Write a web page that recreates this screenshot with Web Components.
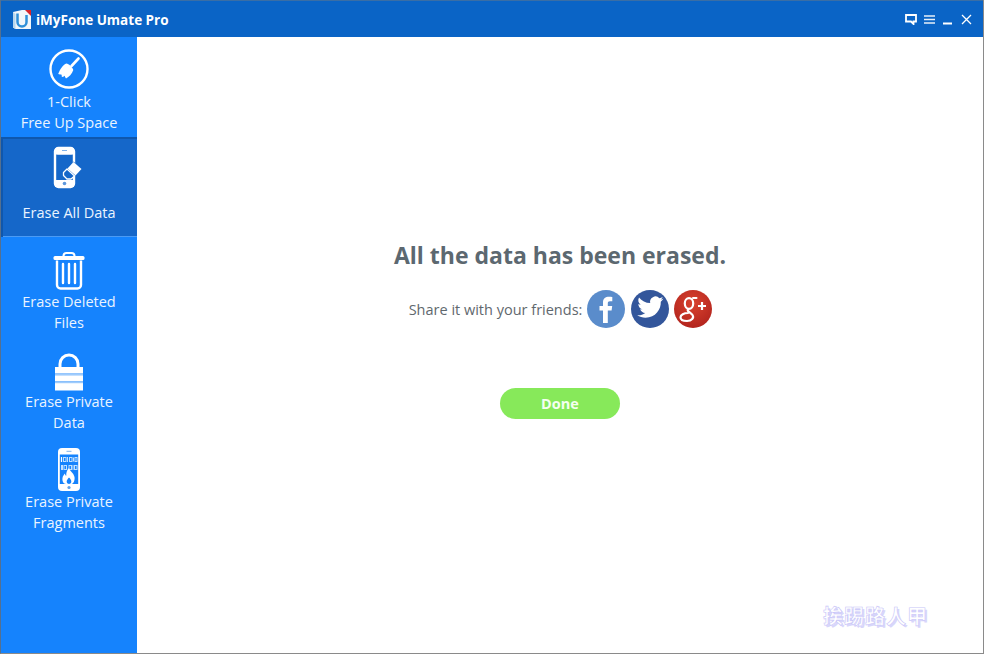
<!DOCTYPE html>
<html>
<head>
<meta charset="utf-8">
<title>iMyFone Umate Pro</title>
<style>
  html, body { margin: 0; height: 100%; }
  body { font-family: "Open Sans", "Noto Sans", sans-serif; overflow: hidden; }
</style>
</head>
<body>
<app-window>
  <title-bar slot="top">iMyFone Umate Pro</title-bar>
  <side-nav slot="side">
    <nav-item icon="broom">1-Click<br><span class="nudge">Free Up Space</span></nav-item>
    <nav-item icon="phone-erase" active>Erase All Data</nav-item>
    <nav-item icon="trash">Erase Deleted<br>Files</nav-item>
    <nav-item icon="lock">Erase Private<br>Data</nav-item>
    <nav-item icon="phone-fire">Erase Private<br>Fragments</nav-item>
  </side-nav>
  <done-panel></done-panel>
</app-window>

<script>
const icons = {
  broom: `<svg width="40" height="40" viewBox="0 0 40 40">
    <circle cx="20" cy="20" r="18.5" fill="none" stroke="#fff" stroke-width="2.4"/>
    <path d="M29.5 9.5 22.5 17" stroke="#fff" stroke-width="2.6" stroke-linecap="round"/>
    <path d="M17.5 14.5c2 .2 6 3.400 6.800 6.500-1.300 4-4.300 7-7.300 8.500-.8-.9-1.200-1.800-1.300-2.700-.9.800-1.800 1.200-2.900 1.300.1-1 0-2-.7-2.800-1 .3-1.900.2-2.900-.3 1-2.800 2-4.500 3.300-6.300 1.400-2 3.300-3.800 5-4.200z" fill="#fff"/>
  </svg>`,
  'phone-erase': `<svg width="32" height="44" viewBox="0 0 32 44">
    <rect x="2" y="2" width="19" height="39" rx="3.500" fill="#1567c9" stroke="#fff" stroke-width="2.400"/>
    <path d="M2 2.500h19v6H2zM2 34h19v7H2z" fill="#fff"/>
    <rect x="2" y="1.500" width="19" height="7" rx="3" fill="#fff"/>
    <rect x="9" y="4" width="5" height="1" fill="#7fb2ea"/>
    <circle cx="11.500" cy="37.500" r="1.800" fill="#5d97dc"/>
    <path d="M20.500 15.500 28 22.500 18.500 32.500 11.500 32 10 28.500z" fill="#1567c9"/>
    <path d="M20.500 16 28.500 23 22.500 29.500 14.500 22.500z" fill="#fff"/>
    <path d="M14 23 21.500 30 18 33h-4L10.500 29.500V26.500z" fill="#1567c9" stroke="#fff" stroke-width="1.300" stroke-linejoin="round"/>
  </svg>`,
  trash: `<svg width="32" height="38" viewBox="0 0 32 38">
    <path d="M10.500 4.500V4a3 3 0 0 1 3-3h5a3 3 0 0 1 3 3v.5" fill="none" stroke="#fff" stroke-width="2"/>
    <rect x="0.500" y="4" width="31" height="4" rx="1.500" fill="#fff"/>
    <path d="M4 8.500V33a3.500 3.500 0 0 0 3.500 3.500h17A3.500 3.500 0 0 0 28 33V8.500" fill="none" stroke="#fff" stroke-width="2.400"/>
    <path d="M10 12v19M16 12v19M22 12v19" stroke="#fff" stroke-width="2.400" stroke-linecap="round"/>
  </svg>`,
  lock: `<svg width="28" height="38" viewBox="0 0 28 38">
    <path d="M5 14V11a9 9 0 0 1 18 0v3" fill="none" stroke="#fff" stroke-width="3"/>
    <rect x="0" y="14" width="28" height="6.500" fill="#fff"/>
    <rect x="0" y="20.500" width="28" height="1.800" fill="#9fcbfb"/>
    <rect x="0" y="22.300" width="28" height="6" fill="#fff"/>
    <rect x="0" y="28.300" width="28" height="1.800" fill="#9fcbfb"/>
    <rect x="0" y="30.100" width="28" height="7.400" fill="#fff"/>
  </svg>`,
  'phone-fire': `<svg width="22" height="43" viewBox="0 0 22 43">
    <rect x="0" y="0" width="22" height="43" rx="4" fill="#fff"/>
    <rect x="8.500" y="2.800" width="5" height="1" fill="#7fb2ea"/>
    <rect x="1.800" y="6.500" width="18.400" height="29.500" fill="#1583fd"/>
    <g fill="none" stroke="#bfe0ff" stroke-width="1">
      <path d="M3.500 9v5M9.500 9v5M15.500 9.500v4M4 17v5M15 17v5"/>
      <rect x="5.500" y="9.500" width="2.500" height="4"/><rect x="11.500" y="9.500" width="2.500" height="4"/>
      <rect x="17" y="9.500" width="2" height="4"/><rect x="6" y="17.500" width="2.500" height="4"/>
      <rect x="11" y="17.500" width="2.500" height="4"/><rect x="16.500" y="17.500" width="2.500" height="4"/>
    </g>
    <path d="M3.500 9v5M4 17v5" stroke="#fff" stroke-width="1.200"/>
    <path d="M11 20c.5 3 4.500 4.500 5.500 9 .6 3-1 7-3 7H8c-2.500 0-4-3-3.500-6 .3-2 1.500-3.500 2.500-4.500 0 1.300.5 2 1.300 2.300C8 24.500 9 22 11 20z" fill="#fff"/>
    <path d="M11 29.500c1.500 1.500 2.500 2.800 2.300 4.500-.2 1.300-1.300 2-2.300 2s-2.100-.7-2.300-2c-.2-1.700 1-3 2.300-4.500z" fill="#1583fd"/>
    <circle cx="11" cy="39.500" r="1.600" fill="#5d9fe8"/>
  </svg>`
}

const barTemplate = document.createElement('template')
barTemplate.innerHTML = `
  <style>
    :host {
      display: flex;
      align-items: center;
      height: 37px;
      box-sizing: border-box;
      padding: 1px 0 0 12px;
      background: #0a64c6;
      border-top: 1px solid #3a6ea5;
      color: #fff;
      font: 700 13.500px "Open Sans", sans-serif;
    }
    .logo { margin-right: 5px; flex: none; }
    .title { flex: 1; }
    .controls { display: flex; align-items: center; gap: 7px; margin-right: 11px; }
    .controls svg { display: block; }
  </style>
  <svg class="logo" width="18" height="19" viewBox="0 0 18 19">
    <path d="M0 2 9 0h9v19H2.500L0 17.500z" fill="#f2f6fa"/>
    <path d="M12 0h6v6z" fill="#d8242c"/>
    <path d="M4.500 3.500v8.500a4.500 4.500 0 0 0 9 0V5" fill="none" stroke="#2f8fd8" stroke-width="2.500"/>
    <path d="M0 2v15.500L2.500 19V4z" fill="#b9d6ec"/>
  </svg>
  <span class="title"><slot></slot></span>
  <div class="controls">
    <svg width="12" height="11" viewBox="0 0 12 11"><path d="M1 1h10v6.500H8.500V10L6 7.500H1z" fill="none" stroke="#fff" stroke-width="1.800"/></svg>
    <svg width="11" height="9" viewBox="0 0 11 9"><path d="M0 1h11M0 4.500h11M0 8h11" stroke="#fff" stroke-width="1.500" opacity=".9"/></svg>
    <svg width="11" height="11" viewBox="0 0 11 11"><path d="M1 9.500h9" stroke="#fff" stroke-width="2"/></svg>
    <svg width="11" height="11" viewBox="0 0 11 11" style="margin-left:1px"><path d="M1 1l9 9M10 1l-9 9" stroke="#fff" stroke-width="1.300"/></svg>
  </div>
`
customElements.define('title-bar', class extends HTMLElement {
  constructor() {
    super()
    this.attachShadow({ mode: 'open' }).append(barTemplate.content.cloneNode(true))
  }
})

const itemTemplate = document.createElement('template')
itemTemplate.innerHTML = `
  <style>
    :host {
      display: block;
      height: 100px;
      box-sizing: border-box;
      color: #eaf4ff;
      font-size: 14.500px;
      line-height: 21px;
      text-align: center;
    }
    :host([active]) {
      background: #1567c9;
      box-shadow: inset 2px 2px 0 #0f57ad, inset 0 -1px 0 #4b9bf5;
    }
    .icon { height: 54px; display: flex; justify-content: center; align-items: flex-end; padding-bottom: 0; box-sizing: border-box; }
    .label { height: 42px; display: flex; align-items: center; justify-content: center; }
    svg { display: block; }
  </style>
  <div class="icon"></div>
  <div class="label"><div><slot></slot></div></div>
`
const iconPad = { broom: 2, 'phone-erase': 1, trash: 1, lock: 0, 'phone-fire': 0 }
customElements.define('nav-item', class extends HTMLElement {
  constructor() {
    super()
    const shadow = this.attachShadow({ mode: 'open' })
    shadow.append(itemTemplate.content.cloneNode(true))
    const name = this.getAttribute('icon')
    const box = shadow.querySelector('.icon')
    box.innerHTML = icons[name]
    box.style.paddingBottom = iconPad[name] + 'px'
  }
})

const navTemplate = document.createElement('template')
navTemplate.innerHTML = `
  <style>
    :host { display: block; width: 136px; background: #1583fd; flex: none; }
    ::slotted(nav-item) { }
  </style>
  <slot></slot>
`
customElements.define('side-nav', class extends HTMLElement {
  constructor() {
    super()
    this.attachShadow({ mode: 'open' }).append(navTemplate.content.cloneNode(true))
  }
})

const doneTemplate = document.createElement('template')
doneTemplate.innerHTML = `
  <style>
    :host {
      display: flex;
      flex-direction: column;
      align-items: center;
      flex: 1;
      position: relative;
      background: #fff;
      padding-top: 200px;
      box-sizing: border-box;
    }
    h1 { margin: 0; height: 36px; font: 700 23px/36px "Open Sans", sans-serif; color: #5c6870; }
    .share { display: flex; align-items: center; gap: 5px; height: 38px; margin-top: 17px; color: #5f686e; font-size: 14.500px; margin-left: 1px; }
    .share span { margin-right: 0; }
    .share svg { display: block; }
    button {
      all: unset;
      width: 120px;
      height: 31px;
      margin-top: 60px;
      border-radius: 16px;
      background: #87e95a;
      color: #f4fff0;
      font: 700 14.500px/31px "Open Sans", sans-serif;
      text-align: center;
    }
    .mark {
      position: absolute;
      right: 55px;
      bottom: 24px;
      font: 700 20px/26px "Noto Sans CJK TC", "Noto Sans CJK SC", sans-serif;
      letter-spacing: 1px;
      color: #fff;
      -webkit-text-stroke: .6px #c9c6f8;
      text-shadow: 2px 2px 0 #d8d6fb;
    }
  </style>
  <h1>All the data has been erased.</h1>
  <div class="share">
    <span>Share it with your friends:</span>
    <svg width="38" height="38" viewBox="0 0 38 38">
      <circle cx="19" cy="19" r="19" fill="#5a8ccb"/>
      <path d="M16 33V20.500h-3.500V16H16v-3.500C16 8.500 18.500 6.800 22 6.800c1.500 0 2.800.1 3.300.2v4.200h-2.300c-1.700 0-2.200.8-2.200 2V16h4.400l-.6 4.500h-3.800V33z" fill="#fff"/>
    </svg>
    <svg width="38" height="38" viewBox="0 0 38 38" style="margin-left:1px">
      <circle cx="19" cy="19" r="19" fill="#33569b"/>
      <path d="M32.500 8.500c-1 .7-2 1-3 1.200 1-.6 1.800-1.600 2.200-2.800-1 .6-2.100 1-3.300 1.300a5.400 5.400 0 0 0-9.200 4.900C14.700 12.900 10.700 10.700 8 7.400c-1.400 2.500-.7 5.600 1.700 7.200-.9 0-1.700-.3-2.400-.7 0 2.600 1.800 4.800 4.300 5.300-.8.200-1.600.2-2.400.1.700 2.100 2.600 3.600 5 3.700-2.300 1.800-5.200 2.600-8 2.300 2.400 1.500 5.300 2.400 8.300 2.400 10 0 15.700-8.500 15.300-16 1-.8 1.900-1.900 2.700-3.200z" fill="#fff"/>
    </svg>
    <svg width="38" height="38" viewBox="0 0 38 38">
      <defs><radialGradient id="gp" cx=".5" cy=".35" r=".7"><stop offset="0" stop-color="#d9432f"/><stop offset="1" stop-color="#b0221c"/></radialGradient></defs>
      <circle cx="19" cy="19" r="19" fill="url(#gp)"/>
      <g fill="none" stroke="#fff" stroke-linecap="round">
        <ellipse cx="15" cy="13.500" rx="4.200" ry="5.300" stroke-width="2.200"/>
        <path d="M19 8h3.500" stroke-width="2"/>
        <path d="M14 19.500c-1.500 1.500 3 3.300 4.500 5.500 1.800 2.700-.8 6-5.500 6-4 0-6.500-1.500-6.500-3.800 0-2.500 3.500-4.200 7.500-4.200" stroke-width="2.200"/>
        <path d="M28 12v8M24 16h8" stroke-width="2.200" stroke-linecap="butt"/>
      </g>
    </svg>
  </div>
  <button>Done</button>
  <div class="mark">挨踢路人甲</div>
`
customElements.define('done-panel', class extends HTMLElement {
  constructor() {
    super()
    this.attachShadow({ mode: 'open' }).append(doneTemplate.content.cloneNode(true))
  }
})

const windowTemplate = document.createElement('template')
windowTemplate.innerHTML = `
  <style>
    :host {
      display: flex;
      flex-direction: column;
      height: 654px;
      box-sizing: border-box;
      border-left: 1px solid #55708f;
      border-right: 1px solid #8a8a8a;
      border-bottom: 1px solid #8a8a8a;
    }
    .body { display: flex; flex: 1; min-height: 0; }
  </style>
  <slot name="top"></slot>
  <div class="body">
    <slot name="side"></slot>
    <slot></slot>
  </div>
`
customElements.define('app-window', class extends HTMLElement {
  constructor() {
    super()
    this.attachShadow({ mode: 'open' }).append(windowTemplate.content.cloneNode(true))
  }
})
</script>
</body>
</html>
